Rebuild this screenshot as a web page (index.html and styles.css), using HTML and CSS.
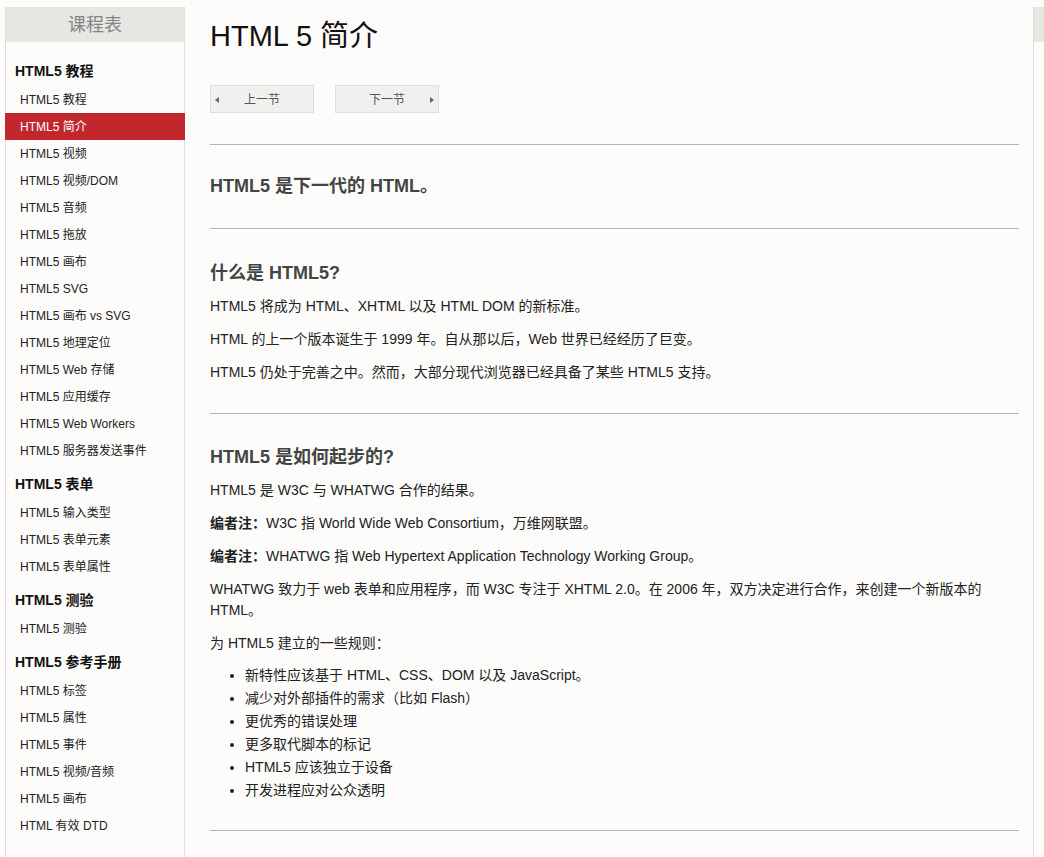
FILE: index.html
```html
<!DOCTYPE html>
<html lang="zh-CN">
<head>
  <meta charset="UTF-8">
  <title>HTML 5 简介</title>
  <link rel="stylesheet" href="styles.css">
</head>
<body>
  <div class="page">

    <!-- 左侧课程表 -->
    <div class="sidebar">
      <div class="sidebar-title">课程表</div>
      <div class="menu">
        <div class="group-title">HTML5 教程</div>
        <a class="item" href="#">HTML5 教程</a>
        <a class="item active" href="#">HTML5 简介</a>
        <a class="item" href="#">HTML5 视频</a>
        <a class="item" href="#">HTML5 视频/DOM</a>
        <a class="item" href="#">HTML5 音频</a>
        <a class="item" href="#">HTML5 拖放</a>
        <a class="item" href="#">HTML5 画布</a>
        <a class="item" href="#">HTML5 SVG</a>
        <a class="item" href="#">HTML5 画布 vs SVG</a>
        <a class="item" href="#">HTML5 地理定位</a>
        <a class="item" href="#">HTML5 Web 存储</a>
        <a class="item" href="#">HTML5 应用缓存</a>
        <a class="item" href="#">HTML5 Web Workers</a>
        <a class="item" href="#">HTML5 服务器发送事件</a>

        <div class="group-title">HTML5 表单</div>
        <a class="item" href="#">HTML5 输入类型</a>
        <a class="item" href="#">HTML5 表单元素</a>
        <a class="item" href="#">HTML5 表单属性</a>

        <div class="group-title">HTML5 测验</div>
        <a class="item" href="#">HTML5 测验</a>

        <div class="group-title">HTML5 参考手册</div>
        <a class="item" href="#">HTML5 标签</a>
        <a class="item" href="#">HTML5 属性</a>
        <a class="item" href="#">HTML5 事件</a>
        <a class="item" href="#">HTML5 视频/音频</a>
        <a class="item" href="#">HTML5 画布</a>
        <a class="item" href="#">HTML 有效 DTD</a>
      </div>
    </div>

    <!-- 正文 -->
    <div class="main">
      <h1>HTML 5 简介</h1>

      <div class="pager">
        <a class="pager-btn prev" href="#">上一节</a>
        <a class="pager-btn next" href="#">下一节</a>
      </div>

      <hr>

      <div class="section section-intro">
        <h2>HTML5 是下一代的 HTML。</h2>
      </div>

      <hr>

      <div class="section">
        <h2>什么是 HTML5?</h2>
        <p>HTML5 将成为 HTML、XHTML 以及 HTML DOM 的新标准。</p>
        <p>HTML 的上一个版本诞生于 1999 年。自从那以后，Web 世界已经经历了巨变。</p>
        <p>HTML5 仍处于完善之中。然而，大部分现代浏览器已经具备了某些 HTML5 支持。</p>
      </div>

      <hr>

      <div class="section section-last">
        <h2>HTML5 是如何起步的?</h2>
        <p>HTML5 是 W3C 与 WHATWG 合作的结果。</p>
        <p><b>编者注：</b>W3C 指 World Wide Web Consortium，万维网联盟。</p>
        <p><b>编者注：</b>WHATWG 指 Web Hypertext Application Technology Working Group。</p>
        <p>WHATWG 致力于 web 表单和应用程序，而 W3C 专注于 XHTML 2.0。在 2006 年，双方决定进行合作，来创建一个新版本的 HTML。</p>
        <p class="list-lead">为 HTML5 建立的一些规则：</p>
        <ul>
          <li>新特性应该基于 HTML、CSS、DOM 以及 JavaScript。</li>
          <li>减少对外部插件的需求（比如 Flash）</li>
          <li>更优秀的错误处理</li>
          <li>更多取代脚本的标记</li>
          <li>HTML5 应该独立于设备</li>
          <li>开发进程应对公众透明</li>
        </ul>
      </div>

      <hr>
    </div>

    <!-- 右侧栏（被裁掉） -->
    <div class="side-right">
      <div class="side-right-title"></div>
    </div>

  </div>
</body>
</html>
```

FILE: styles.css
```css
* { box-sizing: border-box; }

html, body {
  margin: 0;
  padding: 0;
  height: 100%;
  overflow: hidden;
  background: #fdfcfa;
  font-family: "Liberation Sans", "Noto Sans CJK SC", sans-serif;
  color: #222;
}

.page {
  display: flex;
  align-items: stretch;
  min-height: 100vh;
  padding: 7px 0 0 5px;
}

/* 左侧课程表 */
.sidebar {
  flex: 0 0 180px;
  border-left: 1px solid #dcdcda;
  border-right: 1px solid #dcdcda;
}

.sidebar-title {
  height: 35px;
  line-height: 36px;
  background: #e6e6e3;
  color: #858585;
  font-size: 18px;
  text-align: center;
}

.menu {
  padding-top: 9px;
}

.group-title {
  font-size: 14px;
  font-weight: bold;
  line-height: 20px;
  padding: 10px 0 5px 9px;
  color: #111;
}

.item {
  display: block;
  height: 27px;
  line-height: 25px;
  padding: 2px 0 0 14px;
  font-size: 12px;
  color: #222;
  text-decoration: none;
  white-space: nowrap;
}

.item.active {
  background: #c2272d;
  color: #fff;
  margin: 0 -1px;
  padding-left: 15px;
}

/* 正文 */
.main {
  flex: 0 0 809px;
  margin-left: 25px;
}

h1 {
  font-size: 29px;
  font-weight: normal;
  line-height: 38px;
  margin: 10px 0 0;
  color: #111;
}

.pager {
  display: flex;
  gap: 21px;
  margin: 30px 0 31px;
}

.pager-btn {
  position: relative;
  display: block;
  width: 104px;
  height: 28px;
  line-height: 28px;
  background: #f0f0ef;
  border: 1px solid #dedede;
  font-size: 12px;
  color: #555;
  text-align: center;
  text-decoration: none;
}

.pager-btn::before {
  content: '';
  position: absolute;
  top: 11px;
  width: 0;
  height: 0;
  border-top: 3px solid transparent;
  border-bottom: 3px solid transparent;
}

.prev::before {
  left: 4px;
  border-right: 4px solid #666;
}

.next::before {
  right: 4px;
  border-left: 4px solid #666;
}

hr {
  margin: 0;
  border: none;
  border-top: 1px solid #b4b4b2;
  height: 0;
}

.section {
  padding: 31px 0 30px;
}

.section-intro {
  padding: 28px 0 29px;
}

.section-last {
  padding: 30px 0 28px;
}

h2 {
  font-size: 18px;
  line-height: 26px;
  margin: 0 0 10px;
  color: #444;
}

.section-intro h2 {
  margin: 0;
}

p {
  font-size: 14px;
  line-height: 21px;
  margin: 0 0 12px;
}

.section p:last-child {
  margin-bottom: 0;
}

p.list-lead {
  margin-bottom: 10px;
}

ul {
  margin: 0;
  padding-left: 35px;
  font-size: 14px;
  line-height: 23px;
}

/* 右侧栏 */
.side-right {
  flex: 0 0 200px;
  margin-left: 14px;
  border-left: 1px solid #dcdcda;
}

.side-right-title {
  height: 35px;
  background: #e6e6e3;
}
```
